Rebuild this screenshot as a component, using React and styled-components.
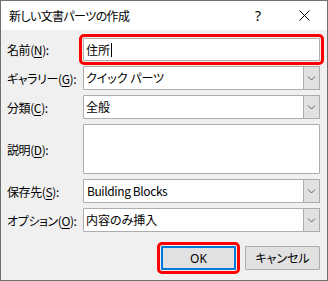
import React from 'react';
import styled, { createGlobalStyle } from 'styled-components';

const GlobalStyle = createGlobalStyle`
  html, body {
    margin: 0;
    padding: 0;
    background: #fff;
  }
  * {
    box-sizing: border-box;
  }
`;

const fields = [
  { label: '名前', key: 'N', type: 'input', value: '住所', highlight: true },
  { label: 'ギャラリー', key: 'G', type: 'select', value: 'クイック パーツ' },
  { label: '分類', key: 'C', type: 'select', value: '全般' },
  { label: '説明', key: 'D', type: 'area', value: '' },
  { label: '保存先', key: 'S', type: 'select', value: 'Building Blocks', latin: true },
  { label: 'オプション', key: 'O', type: 'select', value: '内容のみ挿入' },
];

const Chevron = () => (
  <svg width="9" height="5" viewBox="0 0 9 5">
    <polyline points="1,0.5 4.5,4 8,0.5" fill="none" stroke="#606060" strokeWidth="1" />
  </svg>
);

const CloseIcon = () => (
  <svg width="11" height="11" viewBox="0 0 11 11">
    <path d="M0.5 0.5 L10.5 10.5 M10.5 0.5 L0.5 10.5" stroke="#000" strokeWidth="1" />
  </svg>
);

const App = () => {
  return (
    <>
      <GlobalStyle />
      <Window>
        <TitleBar>
          <Title>新しい文書パーツの作成</Title>
          <TitleButton>?</TitleButton>
          <TitleButton>
            <CloseIcon />
          </TitleButton>
        </TitleBar>

        <Body>
          <Form>
            {fields.map((f) => (
              <React.Fragment key={f.key}>
                <Label>
                  {f.label}(<u>{f.key}</u>):
                </Label>
                {f.type === 'input' && (
                  <Field highlight={f.highlight}>
                    <FieldText>{f.value}</FieldText>
                    <Caret />
                  </Field>
                )}
                {f.type === 'select' && (
                  <Field>
                    <FieldText latin={f.latin}>{f.value}</FieldText>
                    <DropButton>
                      <Chevron />
                    </DropButton>
                  </Field>
                )}
                {f.type === 'area' && <Field />}
              </React.Fragment>
            ))}
          </Form>

          <Footer>
            <Button primary>OK</Button>
            <Button>キャンセル</Button>
          </Footer>
        </Body>
      </Window>
    </>
  );
};

const Window = styled.div`
  width: 328px;
  height: 281px;
  border: 1px solid #707070;
  background: #f0f0f0;
  display: flex;
  flex-direction: column;
  font-family: "Noto Sans CJK JP", "Noto Sans", sans-serif;
  font-feature-settings: "palt";
  font-size: 12px;
  color: #000;
`;

const TitleBar = styled.div`
  height: 29px;
  background: #fff;
  display: flex;
  align-items: center;
  padding-left: 8px;
`;

const Title = styled.div`
  flex: 1;
  font-size: 12px;
  line-height: 1;
  letter-spacing: -0.6px;
`;

const TitleButton = styled.div`
  width: 46px;
  height: 29px;
  display: flex;
  align-items: center;
  justify-content: center;
  font-family: "Noto Sans", sans-serif;
  font-size: 14px;
`;

const Body = styled.div`
  flex: 1;
  padding: 8px 7px 0 6px;
  display: flex;
  flex-direction: column;
`;

const Form = styled.div`
  display: grid;
  grid-template-columns: 76px 237px;
  grid-template-rows: 23px 24px 24px 50px 24px 24px;
  row-gap: 5px;
`;

const Label = styled.div`
  display: flex;
  align-items: center;
  white-space: nowrap;
  letter-spacing: -0.4px;

  u {
    text-decoration-thickness: 1px;
    text-underline-offset: 2px;
  }
`;

const Field = styled.div`
  display: flex;
  align-items: center;
  background: #fff;
  border: 1px solid #adadad;
  padding-left: 2px;
  border-radius: 1px;
  outline: ${(p) => (p.highlight ? '3px solid #ff0000' : 'none')};
  outline-offset: 1px;
`;

const FieldText = styled.span`
  white-space: nowrap;
  line-height: 1;
  padding-left: ${(p) => (p.latin ? '1px' : '0')};
  letter-spacing: ${(p) => (p.latin ? '-0.4px' : '0')};
`;

const Caret = styled.span`
  width: 1px;
  height: 14px;
  background: #000;
  margin-left: 1px;
`;

const DropButton = styled.div`
  align-self: stretch;
  width: 17px;
  margin: -1px -1px -1px auto;
  background: #e1e1e1;
  border: 1px solid #adadad;
  display: flex;
  align-items: center;
  justify-content: center;
`;

const Footer = styled.div`
  margin-top: 14px;
  display: flex;
  justify-content: flex-end;
  gap: 9px;
`;

const Button = styled.div`
  width: 75px;
  height: 24px;
  display: flex;
  align-items: center;
  justify-content: center;
  background: #e1e1e1;
  border: ${(p) => (p.primary ? '2px solid #0078d7' : '1px solid #adadad')};
  font-family: "Noto Sans", "Noto Sans CJK JP", sans-serif;
  outline: ${(p) => (p.primary ? '3px solid #ff0000' : 'none')};
  outline-offset: 1px;
  border-radius: 1px;
`;

export default App;
